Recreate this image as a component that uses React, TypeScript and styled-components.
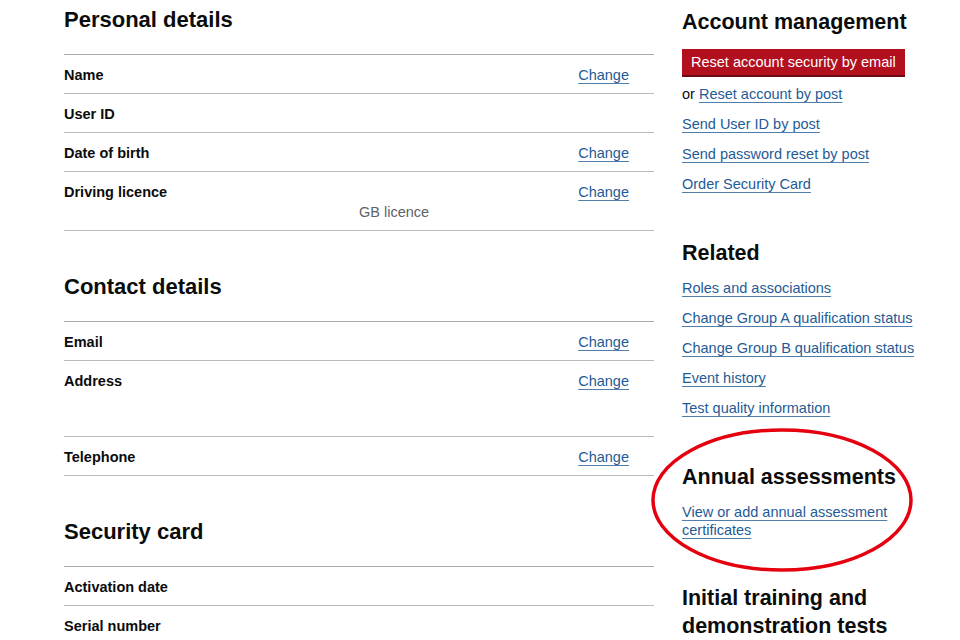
import React from 'react';
import styled, { createGlobalStyle } from 'styled-components';

const GlobalStyle = createGlobalStyle`
  html, body {
    margin: 0;
    padding: 0;
    background: #ffffff;
  }
  body {
    font-family: "Liberation Sans", Arial, sans-serif;
    color: #0b0c0c;
    -webkit-font-smoothing: antialiased;
  }
`;

interface SummaryRow {
  label: string;
  value?: string;
  valueLines?: number;
  change?: boolean;
}

const personal: SummaryRow[] = [
  { label: 'Name', change: true },
  { label: 'User ID' },
  { label: 'Date of birth', change: true },
  { label: 'Driving licence', value: 'GB licence', valueLines: 2, change: true },
];

const contact: SummaryRow[] = [
  { label: 'Email', change: true },
  { label: 'Address', valueLines: 3, change: true },
  { label: 'Telephone', change: true },
];

const security: SummaryRow[] = [
  { label: 'Activation date' },
  { label: 'Serial number' },
];

const accountLinks = ['Send User ID by post', 'Send password reset by post', 'Order Security Card'];

const relatedLinks = [
  'Roles and associations',
  'Change Group A qualification status',
  'Change Group B qualification status',
  'Event history',
  'Test quality information',
];

const SummaryList: React.FC<{ rows: SummaryRow[] }> = ({ rows }) => (
  <List>
    {rows.map((row) => (
      <Row key={row.label}>
        <Key>{row.label}</Key>
        <Value $lines={row.valueLines ?? 1}>
          {row.value && <Muted>{row.value}</Muted>}
        </Value>
        <Actions>{row.change && <Link href="#">Change</Link>}</Actions>
      </Row>
    ))}
  </List>
);

const App: React.FC = () => {
  return (
    <>
      <GlobalStyle />
      <Page>
        <Main>
          <Heading>Personal details</Heading>
          <SummaryList rows={personal} />

          <Heading $spaced>Contact details</Heading>
          <SummaryList rows={contact} />

          <Heading $spaced>Security card</Heading>
          <SummaryList rows={security} />
        </Main>

        <Aside>
          <Section>
            <SideHeading>Account management</SideHeading>
            <WarningButton>Reset account security by email</WarningButton>
            <OrLine>
              or <Link href="#">Reset account by post</Link>
            </OrLine>
            {accountLinks.map((l) => (
              <LinkItem key={l}>
                <Link href="#">{l}</Link>
              </LinkItem>
            ))}
          </Section>

          <Section $spaced>
            <SideHeading>Related</SideHeading>
            {relatedLinks.map((l, i) => (
              <LinkItem key={l} $first={i === 0}>
                <Link href="#">{l}</Link>
              </LinkItem>
            ))}
          </Section>

          <Section $spaced>
            <SideHeading>Annual assessments</SideHeading>
            <WrapItem>
              <Link href="#">View or add annual assessment certificates</Link>
            </WrapItem>
          </Section>

          <Section $spaced>
            <SideHeading>Initial training and demonstration tests</SideHeading>
          </Section>
        </Aside>

        <Annotation width="264" height="148" viewBox="0 0 264 148">
          <ellipse cx="132" cy="74" rx="129" ry="70" fill="none" stroke="#e5000f" strokeWidth="3.5" />
        </Annotation>
      </Page>
    </>
  );
};

const Page = styled.div`
  position: relative;
  display: flex;
  gap: 28px;
  padding: 6px 0 0 64px;
  height: 640px;
  box-sizing: border-box;
  overflow: hidden;
`;

const Main = styled.div`
  width: 590px;
  flex-shrink: 0;
`;

const Heading = styled.h2<{ $spaced?: boolean }>`
  margin: ${(p) => (p.$spaced ? '42px' : '0')} 0 20px;
  font-size: 22px;
  line-height: 28px;
  font-weight: 700;
`;

const List = styled.dl`
  margin: 0;
  border-top: 1px solid #a9abad;
`;

const Row = styled.div`
  display: grid;
  grid-template-columns: 295px 1fr auto;
  border-bottom: 1px solid #b8babc;
  padding: 10px 0 8px;
  font-size: 14.5px;
  line-height: 20px;
`;

const Key = styled.dt`
  font-weight: 700;
`;

const Value = styled.dd<{ $lines: number }>`
  margin: 0;
  min-height: ${(p) => p.$lines * 20 + (p.$lines > 2 ? -3 : 0)}px;
  display: flex;
  align-items: flex-end;
`;

const Muted = styled.span`
  color: #5f6266;
`;

const Actions = styled.dd`
  margin: 0;
  padding-right: 25px;
  text-align: right;
`;

const Link = styled.a`
  color: #1f5b96;
  text-decoration: underline;
  text-decoration-thickness: 1px;
  text-underline-offset: 3px;
  text-decoration-color: #4f7eab;
`;

const Aside = styled.aside`
  width: 250px;
  padding-top: 2px;
`;

const Section = styled.section<{ $spaced?: boolean }>`
  margin-top: ${(p) => (p.$spaced ? '45px' : '0')};
`;

const SideHeading = styled.h2`
  margin: 0;
  font-size: 21.5px;
  line-height: 28px;
  font-weight: 700;
`;

const WarningButton = styled.button`
  display: inline-block;
  margin-top: 13px;
  padding: 4px 9px;
  border: 0;
  background: #b20f1f;
  box-shadow: 0 2px 0 #6a0912;
  color: #ffffff;
  font-family: "Liberation Sans", Arial, sans-serif;
  font-size: 14.5px;
  line-height: 18px;
  cursor: pointer;
`;

const OrLine = styled.p`
  margin: 9px 0 0;
  font-size: 14.5px;
  line-height: 20px;
`;

const LinkItem = styled.p<{ $first?: boolean }>`
  margin: ${(p) => (p.$first ? '11px' : '10px')} 0 0;
  font-size: 14.5px;
  line-height: 20px;
`;

const WrapItem = styled.p`
  margin: 12px 0 0;
  font-size: 14.5px;
  line-height: 18px;
  width: 215px;
`;

const Annotation = styled.svg`
  position: absolute;
  left: 650px;
  top: 426px;
  pointer-events: none;
`;

export default App;
